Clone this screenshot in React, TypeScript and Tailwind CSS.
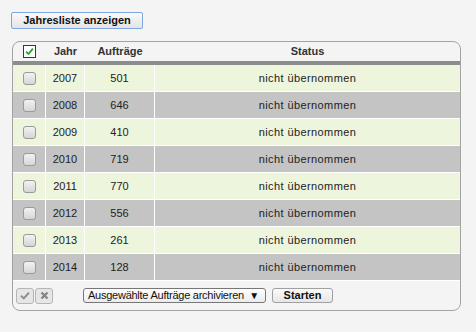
import React from 'react';

const rows = [
  { year: 2007, count: 501 },
  { year: 2008, count: 646 },
  { year: 2009, count: 410 },
  { year: 2010, count: 719 },
  { year: 2011, count: 770 },
  { year: 2012, count: 556 },
  { year: 2013, count: 261 },
  { year: 2014, count: 128 },
];

function Box() {
  return (
    <span className="block w-[13px] h-[13px] rounded-[3px] border border-[#9a9a9a] bg-gradient-to-b from-[#f2f2f2] to-[#d6d6d6]" />
  );
}

export default function App() {
  return (
    <div className="w-[476px] h-[332px] bg-[#f4f4f4] pt-[12px] font-['Liberation_Sans',Arial,sans-serif] text-[#222]">
      <button className="block ml-[11px] w-[132px] h-[17px] rounded-[2px] border border-[#7ea6e0] bg-gradient-to-b from-[#fafafa] to-[#e4e4e4] text-[11px] font-bold leading-none text-[#111]">
        Jahresliste anzeigen
      </button>

      <div className="ml-[12px] mt-[12px] w-[449px] rounded-[8px] border border-[#a3a3a3] bg-[#f4f4f4] overflow-hidden">
        {/* header */}
        <div className="flex h-[19px] items-center text-[11px] font-bold text-[#333]">
          <div className="w-[33px] flex justify-center">
            <span className="flex items-center justify-center w-[13px] h-[13px] border border-[#1d3b66] bg-white">
              <svg width="9" height="9" viewBox="0 0 9 9">
                <path d="M1.2 4.6 L3.5 7 L7.9 1.6" fill="none" stroke="#21a33a" strokeWidth="1.8" />
              </svg>
            </span>
          </div>
          <div className="w-[39px] text-center">Jahr</div>
          <div className="w-[70px] text-center">Aufträge</div>
          <div className="flex-1 text-center">Status</div>
        </div>
        <div className="h-[4px] bg-[#8c8c8c]" />

        {rows.map((r, i) => (
          <div
            key={r.year}
            className={`flex h-[27px] border-b border-white text-[11px] ${i % 2 === 0 ? 'bg-[#edf5dc]' : 'bg-[#c4c4c4]'}`}
          >
            <div className="w-[33px] border-r border-white flex items-center justify-center">
              <Box />
            </div>
            <div className="w-[39px] border-r border-white flex items-center justify-center">{r.year}</div>
            <div className="w-[70px] border-r border-white flex items-center justify-center">{r.count}</div>
            <div className="flex-1 flex items-center justify-center tracking-[0.4px]">nicht übernommen</div>
          </div>
        ))}

        {/* footer */}
        <div className="flex h-[29px] items-center pl-[3px]">
          <span className="flex items-center justify-center w-[18px] h-[16px] rounded-[3px] border border-[#b5b5b5] bg-[#e6e6e6]">
            <svg width="10" height="9" viewBox="0 0 10 9">
              <path d="M1 4.8 L3.8 7.4 L9 1.6" fill="none" stroke="#8d8d8d" strokeWidth="2" />
            </svg>
          </span>
          <span className="ml-[1px] flex items-center justify-center w-[18px] h-[16px] rounded-[3px] border border-[#b5b5b5] bg-[#e6e6e6]">
            <svg width="9" height="9" viewBox="0 0 9 9">
              <path d="M1.5 1.5 L7.5 7.5 M7.5 1.5 L1.5 7.5" fill="none" stroke="#858585" strokeWidth="2.3" />
            </svg>
          </span>
          <div className="ml-[30px] flex items-center justify-between w-[183px] h-[15px] rounded-[3px] border border-[#777] bg-gradient-to-b from-[#fdfdfd] to-[#ececec] pl-[4px] pr-[6px] text-[11px] tracking-[-0.25px] leading-none text-[#111]">
            <span>Ausgewählte Aufträge archivieren</span>
            <span className="text-[10px]">▼</span>
          </div>
          <button className="ml-[6px] w-[61px] h-[15px] rounded-[3px] border border-[#a0a0a0] bg-gradient-to-b from-[#fafafa] to-[#e6e6e6] text-[11px] font-bold leading-none text-[#111]">
            Starten
          </button>
        </div>
      </div>
    </div>
  );
}
